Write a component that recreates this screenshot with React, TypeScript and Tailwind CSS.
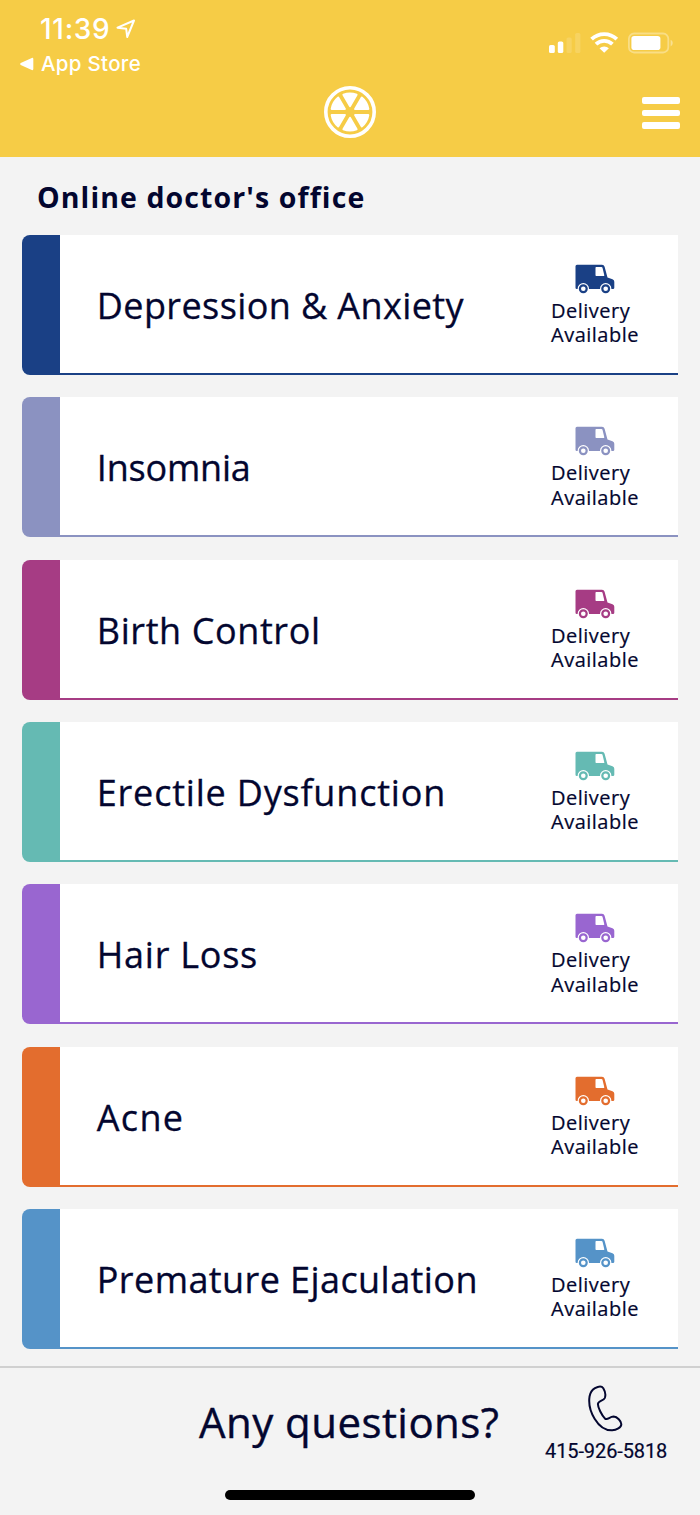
import clsx from "clsx";

// ============================================================
// Types and data
// ============================================================

interface Service {
  name: string;
  tracking: string;
  bar: string;
  border: string;
  icon: string;
}

const SERVICES: Service[] = [
  { name: "Depression & Anxiety", tracking: "tracking-[0.4px]", bar: "bg-[#1a4085]", border: "border-[#1a4085]", icon: "text-[#1a4085]" },
  { name: "Insomnia", tracking: "tracking-[-0.2px]", bar: "bg-[#8b92c1]", border: "border-[#8b92c1]", icon: "text-[#8b92c1]" },
  { name: "Birth Control", tracking: "tracking-[0.6px]", bar: "bg-[#a63c84]", border: "border-[#a63c84]", icon: "text-[#a63c84]" },
  { name: "Erectile Dysfunction", tracking: "tracking-[0.8px]", bar: "bg-[#65bab3]", border: "border-[#65bab3]", icon: "text-[#65bab3]" },
  { name: "Hair Loss", tracking: "tracking-[0.75px]", bar: "bg-[#9966d0]", border: "border-[#9966d0]", icon: "text-[#9966d0]" },
  { name: "Acne", tracking: "tracking-[1.3px]", bar: "bg-[#e36d2e]", border: "border-[#e36d2e]", icon: "text-[#e36d2e]" },
  { name: "Premature Ejaculation", tracking: "tracking-[0.42px]", bar: "bg-[#5593c8]", border: "border-[#5593c8]", icon: "text-[#5593c8]" },
];

// ============================================================
// Icons (inline SVG)
// ============================================================

function LocationIcon() {
  return (
    <svg className="h-5 w-5" viewBox="0 0 20 20" fill="none" stroke="currentColor" strokeWidth={2} strokeLinejoin="round">
      <path d="M1.5 8.7 18 1.5 11.2 18 10.2 9.8Z" />
    </svg>
  );
}

function StatusIcons() {
  return (
    <svg className="h-6 w-[126px]" viewBox="0 0 126 24" fill="currentColor">
      {/* Signal */}
      <rect x="1" y="15" width="5.8" height="8" rx="1.6" />
      <rect x="9.8" y="11.5" width="5.5" height="11.5" rx="1.6" />
      <rect x="18.5" y="7.5" width="5.2" height="15.5" rx="1.6" opacity="0.15" />
      <rect x="27.2" y="3" width="5.2" height="20" rx="1.6" opacity="0.15" />
      {/* Wi-Fi */}
      <g fill="none" stroke="currentColor" strokeWidth="3.8">
        <path d="M43.6 9.2a18 18 0 0 1 25.2 0" />
        <path d="M48 14.1a11.8 11.8 0 0 1 16.4 0" />
      </g>
      <path d="M51.5 18.2a7 7 0 0 1 9.4 0l-4.7 4.6Z" />
      {/* Battery */}
      <rect x="80.9" y="3.5" width="39.4" height="19" rx="5.2" fill="none" stroke="currentColor" strokeWidth="1.8" opacity="0.35" />
      <rect x="83.4" y="6" width="29" height="14" rx="2.8" />
      <path d="M122.6 9.8a3.6 3.6 0 0 1 0 6.6Z" opacity="0.4" />
    </svg>
  );
}

function CitrusLogo() {
  return (
    <svg className="h-[54px] w-[54px]" viewBox="-27 -27 54 54" fill="none" stroke="currentColor">
      <circle r="24.2" strokeWidth="3.6" />
      {[0, 60, 120, 180, 240, 300].map((angle) => (
        <path
          key={angle}
          transform={`rotate(${angle})`}
          d="M0 -6 6.5 -17.3A18.6 18.6 0 0 0 -6.5 -17.3Z"
          fill="currentColor"
          strokeWidth="2.2"
          strokeLinejoin="round"
        />
      ))}
    </svg>
  );
}

function TruckIcon({ className }: { className: string }) {
  return (
    <svg className={clsx("h-[30px] w-10", className)} viewBox="0 0 40 30" fill="currentColor">
      <path
        fillRule="evenodd"
        d="M2 0.8H27Q29 0.8 29.6 2.7L32.5 13.4 37.5 15.2Q39.3 16 39.3 17.8V23.7Q39.3 25 38 25H1.8Q0.5 25 0.5 23.7V2.3Q0.5 0.8 2 0.8ZM21.2 3Q20.5 3 20.5 3.7V11.2Q20.5 12 21.2 12H28.6Q29.5 12 29.3 11.2L27.5 3.8Q27.3 3 26.4 3Z"
      />
      {[8.3, 30.7].map((cx) => (
        <g key={cx}>
          <circle cx={cx} cy="24.8" r="5.7" fill="white" />
          <circle cx={cx} cy="24.8" r="3.4" fill="none" stroke="currentColor" strokeWidth="2.2" />
        </g>
      ))}
    </svg>
  );
}

function PhoneIcon() {
  return (
    <svg className="h-12 w-[38px]" viewBox="0 0 38 48" fill="none" stroke="currentColor" strokeWidth="2" strokeLinejoin="round">
      <path d="M8 4.2C11 2.4 14.6 1.6 16.3 4.2C18 7 18.9 11 17.8 14C16.6 17 11.2 16.5 10.9 20C10.9 23.5 14.6 31 18 34.6C20.6 36.6 22.5 32.6 26.6 32.6C30.4 32.8 34 37 34.3 40C34.5 43.5 29.2 46.2 25.2 46.3C19 46.5 12.2 42.3 7.6 34.7C3.2 27.6 1.6 18.5 2.6 12.2C3.4 8.1 5 6 8 4.2Z" />
    </svg>
  );
}

// ============================================================
// Components
// ============================================================

function Header() {
  return (
    <header className="flex h-[156.5px] shrink-0 flex-col bg-[#f6cc46] text-white">
      <div className="flex h-[78px] shrink-0 justify-between pr-[26px] pl-5 font-['Inter',sans-serif]">
        <div className="pt-[13px]">
          <div className="flex items-center gap-1.5 pl-5 text-[28px] leading-8 font-medium">
            <span className="tracking-[0.7px]">11:39</span>
            <LocationIcon />
          </div>
          <div className="mt-[5px] flex items-center gap-[7px] text-[20.5px] leading-7 font-medium">
            <svg className="h-3.5 w-3.5" viewBox="0 0 14 14" fill="currentColor">
              <path d="M0.7 6.1 11.8 0.9Q13.3 0.4 13.3 2V12Q13.3 13.6 11.8 13L0.7 7.9Q-0.3 7 0.7 6.1Z" />
            </svg>
            <span className="tracking-[0.3px]">App Store</span>
          </div>
        </div>
        <div className="pt-[30px]">
          <StatusIcons />
        </div>
      </div>
      <div className="grid grid-cols-3 pt-[7px]">
        <div className="col-start-2 justify-self-center">
          <CitrusLogo />
        </div>
        <button type="button" aria-label="Menu" className="mt-3 mr-5 flex flex-col gap-1.5 self-start justify-self-end">
          <span className="h-[6.5px] w-[37.5px] rounded-xs bg-white" />
          <span className="h-[6.5px] w-[37.5px] rounded-xs bg-white" />
          <span className="h-[6.5px] w-[37.5px] rounded-xs bg-white" />
        </button>
      </div>
    </header>
  );
}

function ServiceCard({ service }: { service: Service }) {
  return (
    <a className="flex h-[140px] overflow-hidden rounded-l-lg">
      <span className={clsx("w-[37.5px] shrink-0", service.bar)} />
      <span className={clsx("flex flex-1 items-center justify-between border-b-2 bg-white pl-[37px]", service.border)}>
        <span className={clsx("pt-1 text-4xl leading-[48px] whitespace-nowrap [-webkit-text-stroke:0.3px_#03062f]", service.tracking)}>
          {service.name}
        </span>
        <span className="flex h-full w-[126.5px] shrink-0 flex-col pt-[29px] text-xl leading-[24.4px] [-webkit-text-stroke:0.2px_#03062f]">
          <TruckIcon className={clsx("ml-6", service.icon)} />
          <span className="mt-[5px] tracking-[0.5px]">Delivery</span>
          <span className="tracking-[0.5px]">Available</span>
        </span>
      </span>
    </a>
  );
}

function Footer() {
  return (
    <footer className="flex flex-1 flex-col border-t-2 border-[#d0d0d0]">
      <div className="flex h-[122.5px] shrink-0 justify-between pr-[31px] pl-[199px]">
        <p className="pt-[26px] text-[42px] leading-[56px] tracking-[0.45px] whitespace-nowrap [-webkit-text-stroke:0.4px_#03062f]">
          Any questions?
        </p>
        <a className="flex w-[124px] flex-col pt-[16px]">
          <span className="pl-[42px]">
            <PhoneIcon />
          </span>
          <span className="mt-[7px] font-['Roboto',sans-serif] text-xl leading-6 tracking-[-0.1px] whitespace-nowrap [-webkit-text-stroke:0.2px_#03062f]">
            415-926-5818
          </span>
        </a>
      </div>
      <div className="h-[9.5px] w-[250px] shrink-0 self-center rounded-full bg-black" />
    </footer>
  );
}

export default function App() {
  return (
    <div className="flex h-[1515px] w-[700px] flex-col overflow-hidden bg-[#f3f3f3] font-['Open_Sans','Noto_Sans',sans-serif] text-[#03062f]">
      <Header />
      <main className="h-[1209px] shrink-0">
        <h1 className="h-[78.5px] pt-[21px] pl-[37px] text-[28.5px] leading-[38px] font-bold tracking-[1.1px]">Online doctor's office</h1>
        <div className="flex flex-col gap-[22.33px] pr-[22.5px] pl-[22.3px]">
          {SERVICES.map((service) => (
            <ServiceCard key={service.name} service={service} />
          ))}
        </div>
      </main>
      <Footer />
    </div>
  );
}
